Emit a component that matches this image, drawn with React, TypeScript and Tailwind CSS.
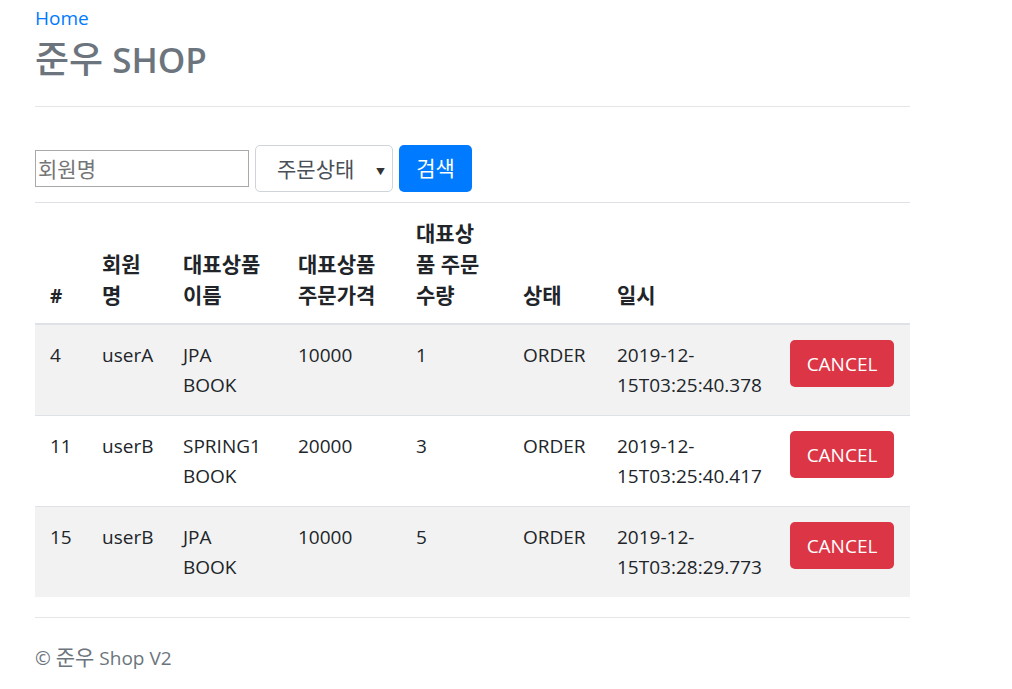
const orders = [
  { id: 4, member: "userA", item: "JPA BOOK", price: 10000, count: 1, status: "ORDER", date: ["2019-12-", "15T03:25:40.378"] },
  { id: 11, member: "userB", item: "SPRING1 BOOK", price: 20000, count: 3, status: "ORDER", date: ["2019-12-", "15T03:25:40.417"] },
  { id: 15, member: "userB", item: "JPA BOOK", price: 10000, count: 5, status: "ORDER", date: ["2019-12-", "15T03:28:29.773"] },
];

// Hangul renders a bit narrower than the Latin font, so bump it up
function K({ children }: { children: React.ReactNode }) {
  return <span className="text-[21px]">{children}</span>;
}

export default function App() {
  return (
    <div
      className="w-full min-h-screen bg-white text-[#212529] text-[19px] leading-[30px]"
      style={{ fontFamily: "'Open Sans', 'Noto Sans CJK KR', sans-serif" }}
    >
      <div className="w-[875px] ml-[35px]">
        {/* Header */}
        <div className="pt-[3px]">
          <a href="#" className="text-[#007bff] text-[19px] leading-[30px]">Home</a>
          <h3 className="text-[#6c757d] text-[35px] leading-[42px] font-semibold mt-[5px]">
            <span className="text-[37px] font-medium">준우</span> SHOP
          </h3>
        </div>
        <div className="mt-[25px] border-t border-[#e6e6e6]" />

        {/* Search form */}
        <form className="mt-[38px] flex items-center gap-[6px]">
          <input
            placeholder="회원명"
            className="w-[214px] h-[37px] border border-[#a9a9a9] px-[2px] text-[21px] placeholder:text-[#757575] outline-none"
          />
          <div className="relative w-[138px] h-[47px] border border-[#ced4da] rounded-[5px] flex items-center pl-[21px] text-[#495057]">
            <K>주문상태</K>
            <span className="absolute right-[7px] top-[11px] text-[9px] text-[#333]">▼</span>
          </div>
          <button type="button" className="w-[73px] h-[47px] rounded-[5px] bg-[#007bff] text-white"><K>검색</K></button>
        </form>

        {/* Table */}
        <table className="mt-[10px] w-full table-fixed border-collapse">
          <colgroup>
            <col className="w-[52px]" />
            <col className="w-[81px]" />
            <col className="w-[115px]" />
            <col className="w-[118px]" />
            <col className="w-[107px]" />
            <col className="w-[94px]" />
            <col className="w-[173px]" />
            <col />
          </colgroup>
          <thead>
            <tr className="border-t border-[#dee2e6] border-b-2 text-left font-bold align-bottom">
              <th className="p-[15px] pb-[12px] font-bold">#</th>
              <th className="p-[15px] pb-[12px] font-bold"><K>회원<br />명</K></th>
              <th className="p-[15px] pb-[12px] font-bold"><K>대표상품<br />이름</K></th>
              <th className="p-[15px] pb-[12px] font-bold"><K>대표상품<br />주문가격</K></th>
              <th className="p-[15px] pb-[12px] font-bold"><K>대표상<br />품 주문<br />수량</K></th>
              <th className="p-[15px] pb-[12px] font-bold"><K>상태</K></th>
              <th className="p-[15px] pb-[12px] font-bold"><K>일시</K></th>
              <th className="p-[15px] pb-[12px] font-bold"></th>
            </tr>
          </thead>
          <tbody>
            {orders.map((o, i) => (
              <tr key={o.id} className={`border-t border-[#dee2e6] align-top ${i % 2 === 0 ? "bg-[#f2f2f2]" : "bg-white"}`}>
                <td className="p-[15px]">{o.id}</td>
                <td className="p-[15px]">{o.member}</td>
                <td className="p-[15px]">{o.item.split(" ")[0]}<br />{o.item.split(" ")[1]}</td>
                <td className="p-[15px]">{o.price}</td>
                <td className="p-[15px]">{o.count}</td>
                <td className="p-[15px]">{o.status}</td>
                <td className="p-[15px] whitespace-nowrap">{o.date[0]}<br />{o.date[1]}</td>
                <td className="p-[15px]">
                  <button type="button" className="w-[104px] h-[47px] rounded-[5px] bg-[#dc3545] text-white">CANCEL</button>
                </td>
              </tr>
            ))}
          </tbody>
        </table>

        {/* Footer */}
        <div className="mt-[20px] border-t border-[#e6e6e6]" />
        <footer className="pt-[24px] text-[#6c757d]">© <K>준우</K> Shop V2</footer>
      </div>
    </div>
  );
}
